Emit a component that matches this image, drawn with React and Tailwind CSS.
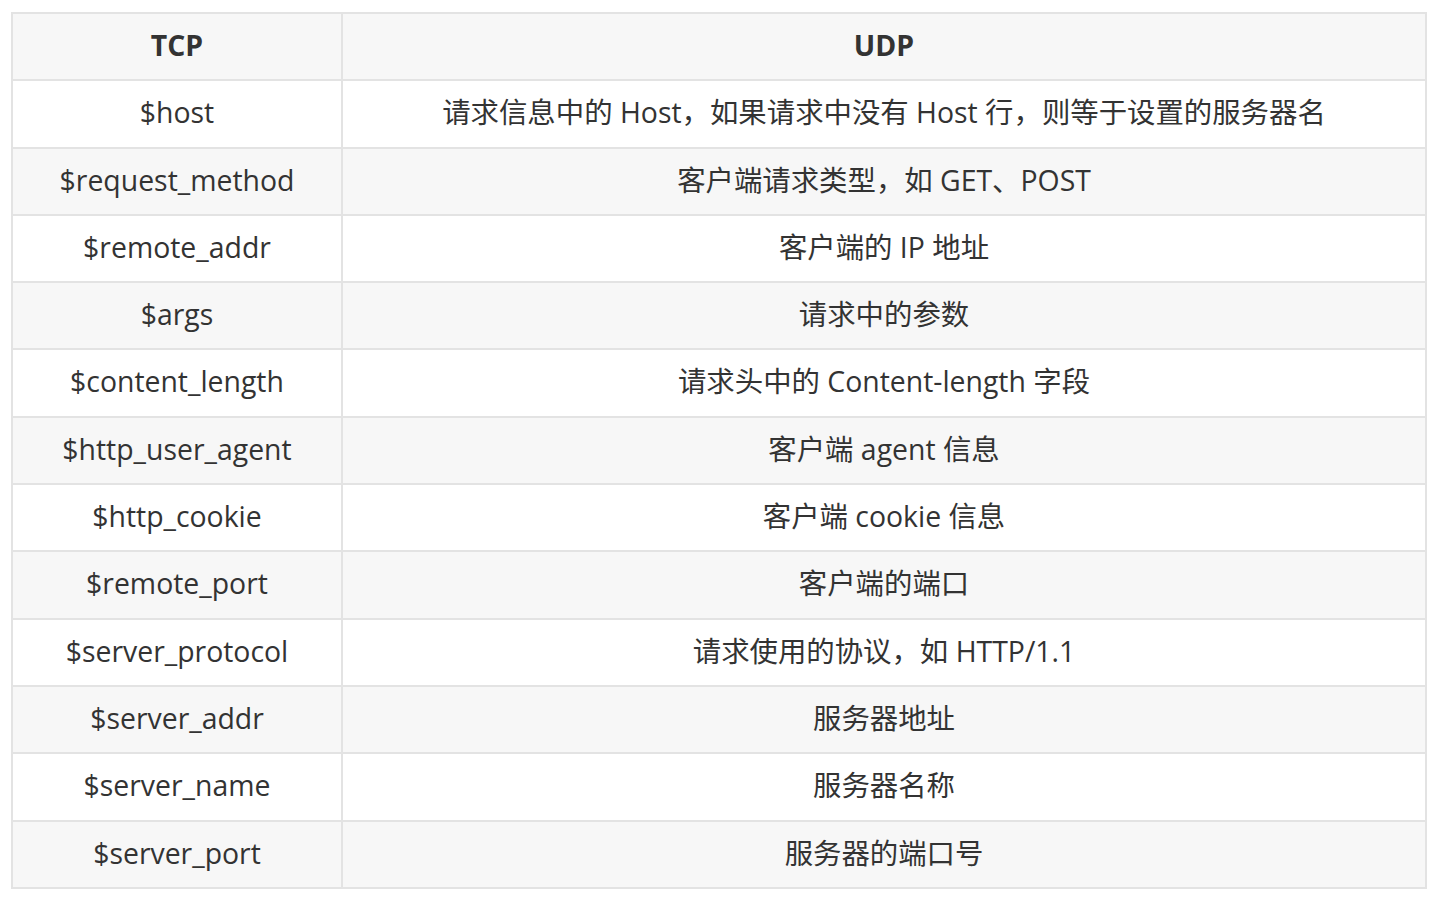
const rows = [
  ['$host', '请求信息中的 Host，如果请求中没有 Host 行，则等于设置的服务器名'],
  ['$request_method', '客户端请求类型，如 GET、POST'],
  ['$remote_addr', '客户端的 IP 地址'],
  ['$args', '请求中的参数'],
  ['$content_length', '请求头中的 Content-length 字段'],
  ['$http_user_agent', '客户端 agent 信息'],
  ['$http_cookie', '客户端 cookie 信息'],
  ['$remote_port', '客户端的端口'],
  ['$server_protocol', '请求使用的协议，如 HTTP/1.1'],
  ['$server_addr', '服务器地址'],
  ['$server_name', '服务器名称'],
  ['$server_port', '服务器的端口号'],
]

export default function App() {
  return (
    <div
      className="w-[1440px] h-[905px] bg-white pl-[11px] pt-[12px] text-[#333]"
      style={{ fontFamily: '"Open Sans", "Noto Sans CJK SC", sans-serif' }}
    >
      <table className="w-[1416px] border-collapse text-[28.4px] leading-none text-center">
        <thead>
          <tr className="bg-[#f7f7f7] h-[67.3px]">
            <th className="w-[330px] border-2 border-[#e3e3e3] font-bold pb-[3px]">TCP</th>
            <th className="border-2 border-[#e3e3e3] font-bold pb-[3px]">UDP</th>
          </tr>
        </thead>
        <tbody>
          {rows.map(([k, v], i) => (
            <tr key={k} className={i % 2 === 1 ? 'bg-[#f7f7f7] h-[67.3px]' : 'bg-white h-[67.3px]'}>
              <td className="border-2 border-[#e3e3e3] pb-[3px]">{k}</td>
              <td className="border-2 border-[#e3e3e3] pb-[3px]">{v}</td>
            </tr>
          ))}
        </tbody>
      </table>
    </div>
  )
}
